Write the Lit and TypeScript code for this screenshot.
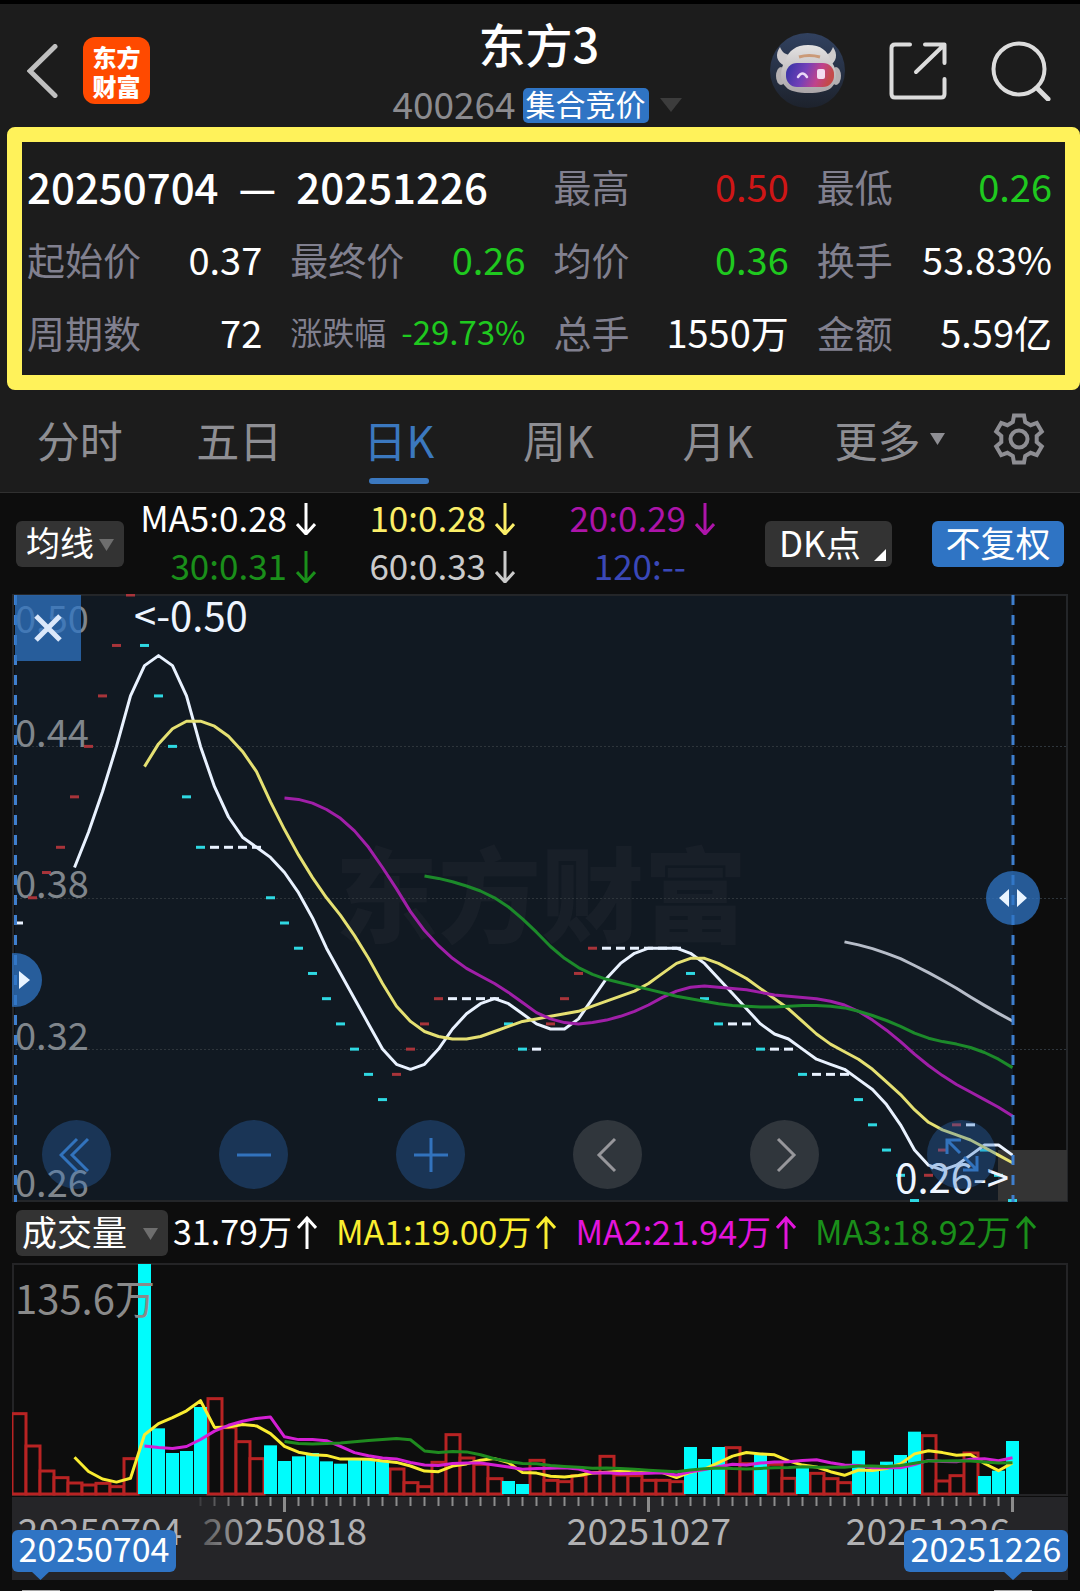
import { LitElement, html, svg, css } from "lit";
import { customElement, state } from "lit/decorators.js";
import { classMap } from "lit/directives/class-map.js";

/* Closing price of each session, in cents. */
const CLOSES = [
  37, 38, 39, 40, 42, 44, 46, 48, 50, 48, 46, 44, 42, 40, 40, 40, 40, 40,
  38, 37, 36, 35, 34, 33, 32, 31, 30, 31, 32, 33, 34, 34, 34, 34, 34, 33,
  32, 32, 33, 34, 35, 36, 36, 36, 36, 36, 36, 36, 35, 34, 33, 33, 33, 32,
  32, 32, 31, 31, 31, 31, 30, 29, 28, 27, 26, 27, 28, 29, 29, 28, 27, 26,
];

/* Traded volume of each session, in thirds of a chart unit. */
const VOLUMES = [
  244, 147, 72, 52, 36, 30, 35, 25, 109, 690, 197, 123, 129, 261, 289, 202,
  160, 109, 146, 99, 113, 123, 98, 91, 102, 106, 97, 78, 37, 25, 98, 181,
  111, 92, 49, 39, 30, 104, 44, 40, 58, 67, 116, 60, 58, 44, 44, 40, 141,
  105, 141, 142, 94, 119, 92, 50, 79, 65, 49, 37, 130, 70, 97, 117, 187,
  178, 42, 58, 126, 54, 70, 159,
];

const STEP = 14;
const xAt = (i: number) => 6.5 + STEP * i;
const priceY = (cents: number) => 1 + (50 - cents) * 25.23;
const volumeY = (v: number) => 231 - v / 3;

function average(values: number[], span: number, toY: (v: number) => number): string {
  const points: string[] = [];
  for (let i = span - 1; i < values.length; i++) {
    let sum = 0;
    for (let k = i - span + 1; k <= i; k++) sum += values[k];
    points.push(`${xAt(i)},${toY(sum / span).toFixed(1)}`);
  }
  return points.join(" ");
}

const trend = (i: number) => {
  if (i === 0 || CLOSES[i] === CLOSES[i - 1]) return "flat";
  return CLOSES[i] > CLOSES[i - 1] ? "up" : "down";
};

const volumeTrend = (i: number) => {
  const falling = (i >= 9 && i <= 13) || (i >= 18 && i <= 26) ||
    [35, 36, 48, 49, 50, 53, 56, 60, 61, 62, 63, 64, 69, 70, 71].includes(i);
  return falling ? "down" : "up";
};

const gearPath = (() => {
  const at = (r: number, deg: number) => {
    const a = (deg * Math.PI) / 180;
    return `${(26 + r * Math.cos(a)).toFixed(1)} ${(26 + r * Math.sin(a)).toFixed(1)}`;
  };
  const parts: string[] = [];
  for (let k = 0; k < 6; k++) {
    const c = -90 + 60 * k;
    parts.push(at(18, c - 20), at(24, c - 12), at(24, c + 12), at(18, c + 20));
  }
  return `M${parts.join("L")}Z`;
})();

const arrow = (up: boolean) => html`<svg class="arrow" viewBox="0 0 20 36" aria-hidden="true">
  ${up
    ? svg`<path d="M10 36V5M1 15L10 5L19 15" />`
    : svg`<path d="M10 4V35M1 25L10 35L19 25" />`}
</svg>`;

@customElement("quote-header")
export class QuoteHeader extends LitElement {
  static styles = css`
    :host { display: block; }
    .bar {
      display: grid; grid-template-columns: 1fr auto 1fr;
      min-height: 127px; box-sizing: border-box;
      padding: 10px 29px 0 27px; border-top: 4px solid #000;
      background: #1c1c1c;
    }
    button {
      display: flex; padding: 0; border: 0; background: none;
      font: inherit; color: inherit; cursor: pointer;
    }
    svg { display: block; fill: none; }
    .side { display: flex; align-items: center; gap: 25px; }
    .tools { justify-content: flex-end; gap: 44px; }
    .logo {
      display: grid; place-content: center; width: 67px; height: 67px;
      border-radius: 12px; background: #ff4a00; color: #fff;
      font-size: 24px; font-weight: 900; line-height: 29px; text-decoration: none;
    }
    .logo span { display: block; }
    .title { margin: 0; font-size: 47px; font-weight: 500; line-height: 58px; text-align: center; color: #fff; }
    .sub { display: flex; align-items: center; gap: 7px; margin-top: 15px; height: 36px; }
    .code { margin-bottom: 4px; font-size: 37px; line-height: 36px; color: #8b8b8f; }
    .badge {
      padding: 0 3px 4px; border-radius: 5px; background: #2f74c4; color: #fff;
      font-size: 30px; line-height: 31px;
    }
    .more { padding: 0 4px; }
  `;

  render() {
    return html`
      <header class="bar">
        <div class="side">
          <button aria-label="返回">
            <svg width="31" height="54" viewBox="0 0 31 54">
              <path d="M28 2.5L3 27L28 51.5" stroke="#bfbfbf" stroke-width="5" stroke-linecap="round" />
            </svg>
          </button>
          <a class="logo" href="#"><span>东方</span><span>财富</span></a>
        </div>
        <div>
          <h1 class="title">东方3</h1>
          <div class="sub">
            <span class="code">400264</span>
            <span class="badge">集合竞价</span>
            <button class="more" aria-label="切换">
              <svg width="22" height="14" viewBox="0 0 22 14"><path d="M0 0H22L11 14Z" fill="#3c3c3c" /></svg>
            </button>
          </div>
        </div>
        <div class="side tools">
          <button aria-label="智能助手">
            <svg width="75" height="75" viewBox="0 0 75 75">
              <defs>
                <linearGradient id="sky" x1="0" y1="0" x2="0" y2="1">
                  <stop offset="0" stop-color="#31415f" /><stop offset="1" stop-color="#1d222c" />
                </linearGradient>
                <linearGradient id="visor" x1="0" y1="0" x2="1" y2="0.2">
                  <stop offset="0" stop-color="#3232a4" /><stop offset="0.45" stop-color="#7440b8" />
                  <stop offset="0.75" stop-color="#c0428c" /><stop offset="1" stop-color="#c44a4a" />
                </linearGradient>
                <linearGradient id="shell" x1="0" y1="0" x2="0" y2="1">
                  <stop offset="0" stop-color="#e4e2e2" /><stop offset="1" stop-color="#aaa5a8" />
                </linearGradient>
              </defs>
              <circle cx="37.5" cy="37.5" r="37.5" fill="url(#sky)" />
              <path d="M10 14C5 21 6 29 15 33L22 22C15 22 12 19 10 14Z" fill="#cfcccd" />
              <path d="M63 14C68 21 67 29 59 33L53 22C59 22 61 19 63 14Z" fill="#cfcccd" />
              <ellipse cx="11" cy="43" rx="5" ry="9" fill="#b5b1b3" />
              <ellipse cx="66" cy="43" rx="5" ry="9" fill="#b5b1b3" />
              <path d="M38 12C51 12 58 18 60 27C67 34 68 48 62 54C55 62 22 62 16 54C9 48 10 34 16 27C18 18 26 12 38 12Z" fill="url(#shell)" />
              <path d="M29 24Q39 21 50 24" stroke="#cb9a78" stroke-width="3" />
              <rect x="16" y="30" width="48" height="24" rx="11" fill="url(#visor)" />
              <path d="M28 44Q32.5 37 37 44" stroke="#e9d8f6" stroke-width="2.5" stroke-linecap="round" />
              <rect x="47" y="36" width="8" height="10" rx="2" fill="#f3dcf1" />
            </svg>
          </button>
          <button aria-label="分享">
            <svg width="58" height="58" viewBox="0 0 58 58" stroke="#dcdcdc" stroke-width="4" stroke-linecap="round" stroke-linejoin="round">
              <path d="M21 2.5H6Q2.500 2.500 2.500 6V52Q2.500 55.500 6 55.500H52Q55.500 55.500 55.500 52V37" />
              <path d="M36 2.500H55.500V21M55 3L27 30" />
            </svg>
          </button>
          <button aria-label="搜索">
            <svg width="60" height="60" viewBox="0 0 60 60" stroke="#dcdcdc" stroke-width="4">
              <circle cx="28" cy="28" r="25.500" />
              <path d="M46 47L57 58" stroke-width="5" stroke-linecap="round" />
            </svg>
          </button>
        </div>
      </header>
    `;
  }
}

@customElement("range-stats")
export class RangeStats extends LitElement {
  static styles = css`
    :host { display: block; background: #1c1c1c; }
    .frame {
      margin-left: 7px; border: 15px solid #fff25a; border-radius: 8px;
      padding: 7px 13px 7px 5px;
    }
    .grid {
      display: grid; grid-template-columns: repeat(4, minmax(0, 1fr));
      column-gap: 28px; grid-auto-rows: 73px; margin: 0;
    }
    .cell, .range { display: flex; justify-content: space-between; align-items: center; white-space: nowrap; }
    .range { grid-column: span 2; justify-content: flex-start; gap: 20px; font-size: 42px; font-weight: 500; color: #fff; }
    dt, dd { margin: 0; font-size: 38px; line-height: 73px; }
    dt { color: #81808f; }
    dd { color: #fff; }
    .range dd, .range dt { font-size: inherit; color: inherit; }
    .small dt { font-size: 32px; }
    .small dd { font-size: 33px; }
    .cell .green { color: #1fc91f; }
    .cell .red { color: #cf1616; }
  `;

  private cells = [
    ["最高", "0.50", "red"], ["最低", "0.26", "green"],
    ["起始价", "0.37", ""], ["最终价", "0.26", "green"], ["均价", "0.36", "green"], ["换手", "53.83%", ""],
    ["周期数", "72", ""], ["涨跌幅", "-29.73%", "green"], ["总手", "1550万", ""], ["金额", "5.59亿", ""],
  ];

  render() {
    return html`
      <div class="frame">
        <dl class="grid">
          <div class="range"><dt>20250704</dt><dd>—</dd><dd>20251226</dd></div>
          ${this.cells.map(([label, value, tone]) => html`
            <div class=${classMap({ cell: true, small: label === "涨跌幅" })}>
              <dt>${label}</dt>
              <dd class=${tone}>${value}</dd>
            </div>`)}
        </dl>
      </div>
    `;
  }
}

@customElement("period-tabs")
export class PeriodTabs extends LitElement {
  static styles = css`
    :host { display: block; background: #1c1c1c; }
    .tabs {
      display: grid; grid-template-columns: repeat(6, 160fr) 123fr;
      height: 102px; border-bottom: 1px solid #303030;
    }
    button {
      position: relative; padding: 0 0 4px; border: 0; background: none;
      font: inherit; font-size: 43px; line-height: 98px; color: #8e8e93; cursor: pointer;
      display: flex; justify-content: center; align-items: center;
    }
    .on { color: #3b78bf; }
    .on::after {
      content: ""; position: absolute; left: calc(50% - 30px); bottom: 8px;
      width: 60px; height: 6px; border-radius: 3px; background: #3b78bf;
    }
    .caret { position: absolute; left: calc(50% + 52px); fill: #8e8e93; }
    .gear { fill: none; stroke: #8e8e93; stroke-width: 4; }
  `;

  @state() private active = 2;

  render() {
    return html`
      <nav class="tabs">
        ${["分时", "五日", "日K", "周K", "月K", "更多"].map((name, i) => html`
          <button class=${classMap({ on: i === this.active })} @click=${() => (this.active = i)}>
            ${name}${i === 5
              ? html`<svg class="caret" width="15" height="12" viewBox="0 0 15 12"><path d="M0 0H15L7.500 12Z" /></svg>`
              : ""}
          </button>`)}
        <button aria-label="设置">
          <svg class="gear" width="52" height="52" viewBox="0 0 52 52">
            <path d=${gearPath} />
            <circle cx="26" cy="26" r="8.500" />
          </svg>
        </button>
      </nav>
    `;
  }
}

@customElement("average-bar")
export class AverageBar extends LitElement {
  static styles = css`
    :host { display: block; }
    .row { display: flex; align-items: center; height: 101px; padding: 0 16px; }
    button {
      position: relative; display: flex; align-items: center; height: 46px; box-sizing: border-box;
      border: 0; border-radius: 6px; background: #333; color: #fff;
      font: inherit; font-size: 35px; line-height: 46px; white-space: nowrap; cursor: pointer; padding: 0 0 4px;
    }
    .pick { width: 108px; padding-left: 10px; gap: 5px; font-size: 34px; }
    .pick svg { fill: #6e6e6e; margin-top: 6px; }
    .dk { width: 127px; padding-left: 14px; font-size: 35px; }
    .dk svg { position: absolute; right: 6px; bottom: 6px; fill: #fff; }
    .adjust { width: 132px; margin-left: 40px; justify-content: center; background: #2f74c4; }
    .list {
      flex: 1; display: grid; grid-template-columns: 192fr 199fr 200fr;
      grid-auto-rows: 48px; margin: 0 50px 6px 0; padding: 0; list-style: none;
      font-size: 35px; line-height: 48px;
    }
    li { display: flex; justify-content: flex-end; align-items: center; gap: 9px; white-space: nowrap; }
    .arrow, .blank { width: 20px; height: 36px; }
    .arrow { fill: none; stroke: currentColor; stroke-width: 3; }
    .m5 { color: #fff; } .m10 { color: #fbee68; } .m20 { color: #ad14a9; }
    .m30 { color: #1a8f1a; } .m60 { color: #cbcbcb; } .m120 { color: #3a48b8; }
  `;

  render() {
    return html`
      <div class="row">
        <button class="pick">均线<svg width="15" height="12" viewBox="0 0 15 12"><path d="M0 0H15L7.500 12Z" /></svg></button>
        <ul class="list">
          <li class="m5">MA5:0.28${arrow(false)}</li>
          <li class="m10">10:0.28${arrow(false)}</li>
          <li class="m20">20:0.29${arrow(false)}</li>
          <li class="m30">30:0.31${arrow(false)}</li>
          <li class="m60">60:0.33${arrow(false)}</li>
          <li class="m120">120:--<span class="blank"></span></li>
        </ul>
        <button class="dk">DK点<svg width="12" height="12" viewBox="0 0 12 12"><path d="M12 0V12H0Z" /></svg></button>
        <button class="adjust">不复权</button>
      </div>
    `;
  }
}

@customElement("price-chart")
export class PriceChart extends LitElement {
  static styles = css`
    :host { display: block; margin: 0 12px; position: relative; overflow: hidden; }
    .plot { display: block; width: 100%; height: auto; }
    .plot text { font-family: inherit; }
    .mark { font-size: 103px; font-weight: 900; fill: #181f28; }
    .grid { stroke: #2e353b; stroke-width: 1; stroke-dasharray: 2 2; }
    .frame { fill: none; stroke: #242629; stroke-width: 2; }
    .scale { font-size: 38px; fill: #80868c; }
    .note { font-size: 40px; fill: #eef5ff; }
    .line { fill: none; stroke-width: 3; stroke-linejoin: round; }
    .w { stroke: #e9f2ff; } .y { stroke: #e5e072; } .p { stroke: #a01fa8; }
    .g { stroke: #1c8a2a; } .s { stroke: #b7bdc9; }
    .up { fill: #a8343a; } .down { fill: #2fd8e2; } .flat { fill: #e9f2ff; }
    .edge { stroke: #3f7fce; stroke-width: 3; stroke-dasharray: 10 10; }
    button { padding: 0; border: 0; cursor: pointer; display: grid; place-content: center; }
    button svg { display: block; fill: none; stroke: #3273bd; stroke-width: 3; }
    .close { position: absolute; left: 3px; top: 1px; width: 66px; height: 66px; background: rgba(47, 116, 196, 0.75); }
    .close svg { stroke: #dbe8fa; stroke-width: 5; }
    .handle {
      position: absolute; width: 54px; height: 54px; border-radius: 50%;
      background: rgba(47, 116, 196, 0.75);
    }
    .handle svg { fill: #e9f4ff; stroke: none; }
    .start { left: -24px; top: 59%; }
    .end { right: 28px; top: 277px; }
    .tools {
      position: absolute; left: 30px; right: 72px; bottom: 13px;
      display: flex; justify-content: space-between;
    }
    .tools button { width: 69px; height: 69px; border-radius: 50%; background: rgba(47, 116, 196, 0.32); }
    .tools .gray { background: rgba(130, 130, 130, 0.28); }
    .tools .gray svg { stroke: #97979b; }
  `;

  render() {
    return html`
      <svg class="plot" viewBox="0 0 1056 608" role="img" aria-label="日K">
        <rect x="3" y="1" width="998" height="606" fill="#111922" />
        <text class="mark" x="323" y="341">东方财富</text>
        ${[152, 304, 455].map((y) => svg`<line class="grid" x1="0" x2="1056" y1=${y + 0.5} y2=${y + 0.5} />`)}
        <rect class="frame" x="1" y="1" width="1054" height="606" />
        <rect x="986" y="556" width="69" height="51" fill="#343434" />
        ${[["0.50", 39], ["0.44", 153], ["0.38", 304], ["0.32", 456], ["0.26", 603]].map(
          ([t, y]) => svg`<text class="scale" x="3" y=${y}>${t}</text>`)}
        ${CLOSES.map((c, i) => svg`<rect class=${trend(i)} x=${i === 0 ? 4 : xAt(i) - 4.5} y=${priceY(c) - 1.5} width=${i === 0 ? 7 : 9} height="3" />`)}
        <polyline class="line w" points=${average(CLOSES, 5, priceY)} />
        <polyline class="line y" points=${average(CLOSES, 10, priceY)} />
        <polyline class="line p" points=${average(CLOSES, 20, priceY)} />
        <polyline class="line g" points=${average(CLOSES, 30, priceY)} />
        <polyline class="line s" points=${average(CLOSES, 60, priceY)} />
        <text class="note" x="122" y="37">&lt;-0.50</text>
        <text class="note" x="997" y="599" text-anchor="end">0.26-&gt;</text>
        <line class="edge" x1="3.500" x2="3.500" y1="1" y2="608" />
        <line class="edge" x1="1001" x2="1001" y1="1" y2="608" />
      </svg>
      <button class="close" aria-label="关闭">
        <svg width="28" height="28" viewBox="0 0 28 28"><path d="M2 2L26 26M26 2L2 26" /></svg>
      </button>
      <button class="handle start" aria-label="起点">
        <svg width="32" height="20" viewBox="0 0 32 20"><path d="M20 1L31 10L20 19Z" /></svg>
      </button>
      <button class="handle end" aria-label="终点">
        <svg width="28" height="20" viewBox="0 0 28 20"><path d="M10 1L0 10L10 19ZM18 1L28 10L18 19Z" /></svg>
      </button>
      <div class="tools">
        <button aria-label="最前">
          <svg width="36" height="36" viewBox="0 0 36 36"><path d="M18 2L2 18L18 34M29 2L13 18L29 34" /></svg>
        </button>
        <button aria-label="缩小">
          <svg width="36" height="36" viewBox="0 0 36 36"><path d="M1 18H35" /></svg>
        </button>
        <button aria-label="放大">
          <svg width="36" height="36" viewBox="0 0 36 36"><path d="M1 18H35M18 1V35" /></svg>
        </button>
        <button class="gray" aria-label="左移">
          <svg width="36" height="36" viewBox="0 0 36 36"><path d="M25 2L9 18L25 34" /></svg>
        </button>
        <button class="gray" aria-label="右移">
          <svg width="36" height="36" viewBox="0 0 36 36"><path d="M11 2L27 18L11 34" /></svg>
        </button>
        <button aria-label="全屏">
          <svg width="36" height="36" viewBox="0 0 36 36"><path d="M17 3H3V17M3 3L16 16M19 33H33V19M33 33L20 20" /></svg>
        </button>
      </div>
    `;
  }
}

@customElement("volume-bar")
export class VolumeBar extends LitElement {
  static styles = css`
    :host { display: block; }
    .row { display: flex; align-items: center; height: 61px; padding: 0 16px; gap: 5px; }
    button {
      display: flex; align-items: center; justify-content: space-between; width: 152px; height: 46px;
      box-sizing: border-box; padding: 0 10px 4px 6px; border: 0; border-radius: 6px; background: #333;
      color: #fff; font: inherit; font-size: 35px; line-height: 46px; white-space: nowrap; cursor: pointer;
    }
    button svg { fill: #6e6e6e; margin-top: 6px; }
    .list { display: flex; gap: 19px; margin: 0 0 4px; padding: 0; list-style: none; font-size: 34px; line-height: 48px; }
    li { display: flex; align-items: center; gap: 5px; white-space: nowrap; }
    .arrow { width: 20px; height: 36px; fill: none; stroke: currentColor; stroke-width: 3; }
    .v { color: #fff; } .y { color: #fbee30; } .p { color: #e314dc; } .g { color: #1a8f1a; }
  `;

  render() {
    return html`
      <div class="row">
        <button>成交量<svg width="15" height="12" viewBox="0 0 15 12"><path d="M0 0H15L7.500 12Z" /></svg></button>
        <ul class="list">
          <li class="v">31.79万${arrow(true)}</li>
          <li class="y">MA1:19.00万${arrow(true)}</li>
          <li class="p">MA2:21.94万${arrow(true)}</li>
          <li class="g">MA3:18.92万${arrow(true)}</li>
        </ul>
      </div>
    `;
  }
}

@customElement("volume-chart")
export class VolumeChart extends LitElement {
  static styles = css`
    :host { display: block; margin: 0 12px; }
    .plot { display: block; width: 100%; height: auto; }
    .frame { fill: none; stroke: #242426; stroke-width: 2; }
    .up { fill: #0d0d0d; stroke: #b82323; stroke-width: 3; }
    .down { fill: #00fcfc; }
    .scale { font-size: 40px; fill: #8a8a8a; }
    .line { fill: none; stroke-width: 3; stroke-linejoin: round; }
    .y { stroke: #f9ec31; } .p { stroke: #d41fd4; } .g { stroke: #1f8a1f; }
    .tick { fill: #8c8c8c; }
    .date { font-size: 37px; fill: #b2b2b4; text-anchor: middle; }
    .fading { fill: url(#fade); }
    .chip { fill: #2f74c4; }
    .chosen { font-size: 34px; fill: #fff; text-anchor: middle; }
  `;

  render() {
    const ticks = Array.from({ length: 59 }, (_, k) => k + 13);
    return html`
      <svg class="plot" viewBox="0 0 1056 317" role="img" aria-label="成交量">
        <defs>
          <linearGradient id="fade" x1="0" x2="1" y1="0" y2="0">
            <stop offset="0" stop-color="#5c5c5e" /><stop offset="0.3" stop-color="#b2b2b4" />
          </linearGradient>
        </defs>
        <rect class="frame" x="1" y="1" width="1054" height="231" />
        ${VOLUMES.map((v, i) => {
          const y = volumeY(v);
          return volumeTrend(i) === "up"
            ? svg`<rect class="up" x=${xAt(i) - 6.5} y=${y + 1} width="14" height=${231 - y - 1} />`
            : svg``;
        })}
        ${VOLUMES.map((v, i) => {
          const y = volumeY(v);
          return volumeTrend(i) === "down"
            ? svg`<rect class="down" x=${xAt(i) - 6.5} y=${y} width="13" height=${231 - y} />`
            : svg``;
        })}
        <polyline class="line y" points=${average(VOLUMES, 5, volumeY)} />
        <polyline class="line p" points=${average(VOLUMES, 10, volumeY)} />
        <polyline class="line g" points=${average(VOLUMES, 20, volumeY)} />
        <text class="scale" x="3" y="51">135.6万</text>
        <rect x="0" y="234" width="1056" height="83" fill="#252528" />
        ${ticks.map((i) => {
          const long = i === 19 || i === 45 || i === 71;
          return svg`<rect class="tick" x=${xAt(i) - (long ? 1.5 : 1)} y="234" width=${long ? 3 : 2} height=${long ? 15 : 9} opacity=${Math.min(1, (i - 12) / 4)} />`;
        })}
        <text class="date" x="88" y="282">20250704</text>
        <text class="date fading" x="273" y="282">20250818</text>
        <text class="date" x="637" y="282">20251027</text>
        <text class="date" x="916" y="282">20251226</text>
        <rect class="chip" x="0" y="267" width="164" height="42" rx="6" />
        <path class="chip" d="M19 308H38L28.500 317Z" />
        <text class="chosen" x="82" y="299">20250704</text>
        <rect class="chip" x="892" y="267" width="164" height="42" rx="6" />
        <path class="chip" d="M991 308H1011L1001 317Z" />
        <text class="chosen" x="974" y="299">20251226</text>
      </svg>
    `;
  }
}

@customElement("app-root")
export class AppRoot extends LitElement {
  static styles = css`
    :host {
      display: block; background: #0d0d0d; color: #fff;
      font-family: "Noto Sans CJK SC", "Noto Sans", sans-serif;
    }
    .next { display: flex; justify-content: space-between; align-items: flex-end; height: 11px; padding: 0 48px 0 22px; }
    .tip { width: 38px; height: 1px; background: #a5a5a5; }
  `;

  render() {
    return html`
      <quote-header></quote-header>
      <range-stats></range-stats>
      <period-tabs></period-tabs>
      <average-bar></average-bar>
      <price-chart></price-chart>
      <volume-bar></volume-bar>
      <volume-chart></volume-chart>
      <div class="next"><span class="tip"></span><span class="tip"></span></div>
    `;
  }
}
